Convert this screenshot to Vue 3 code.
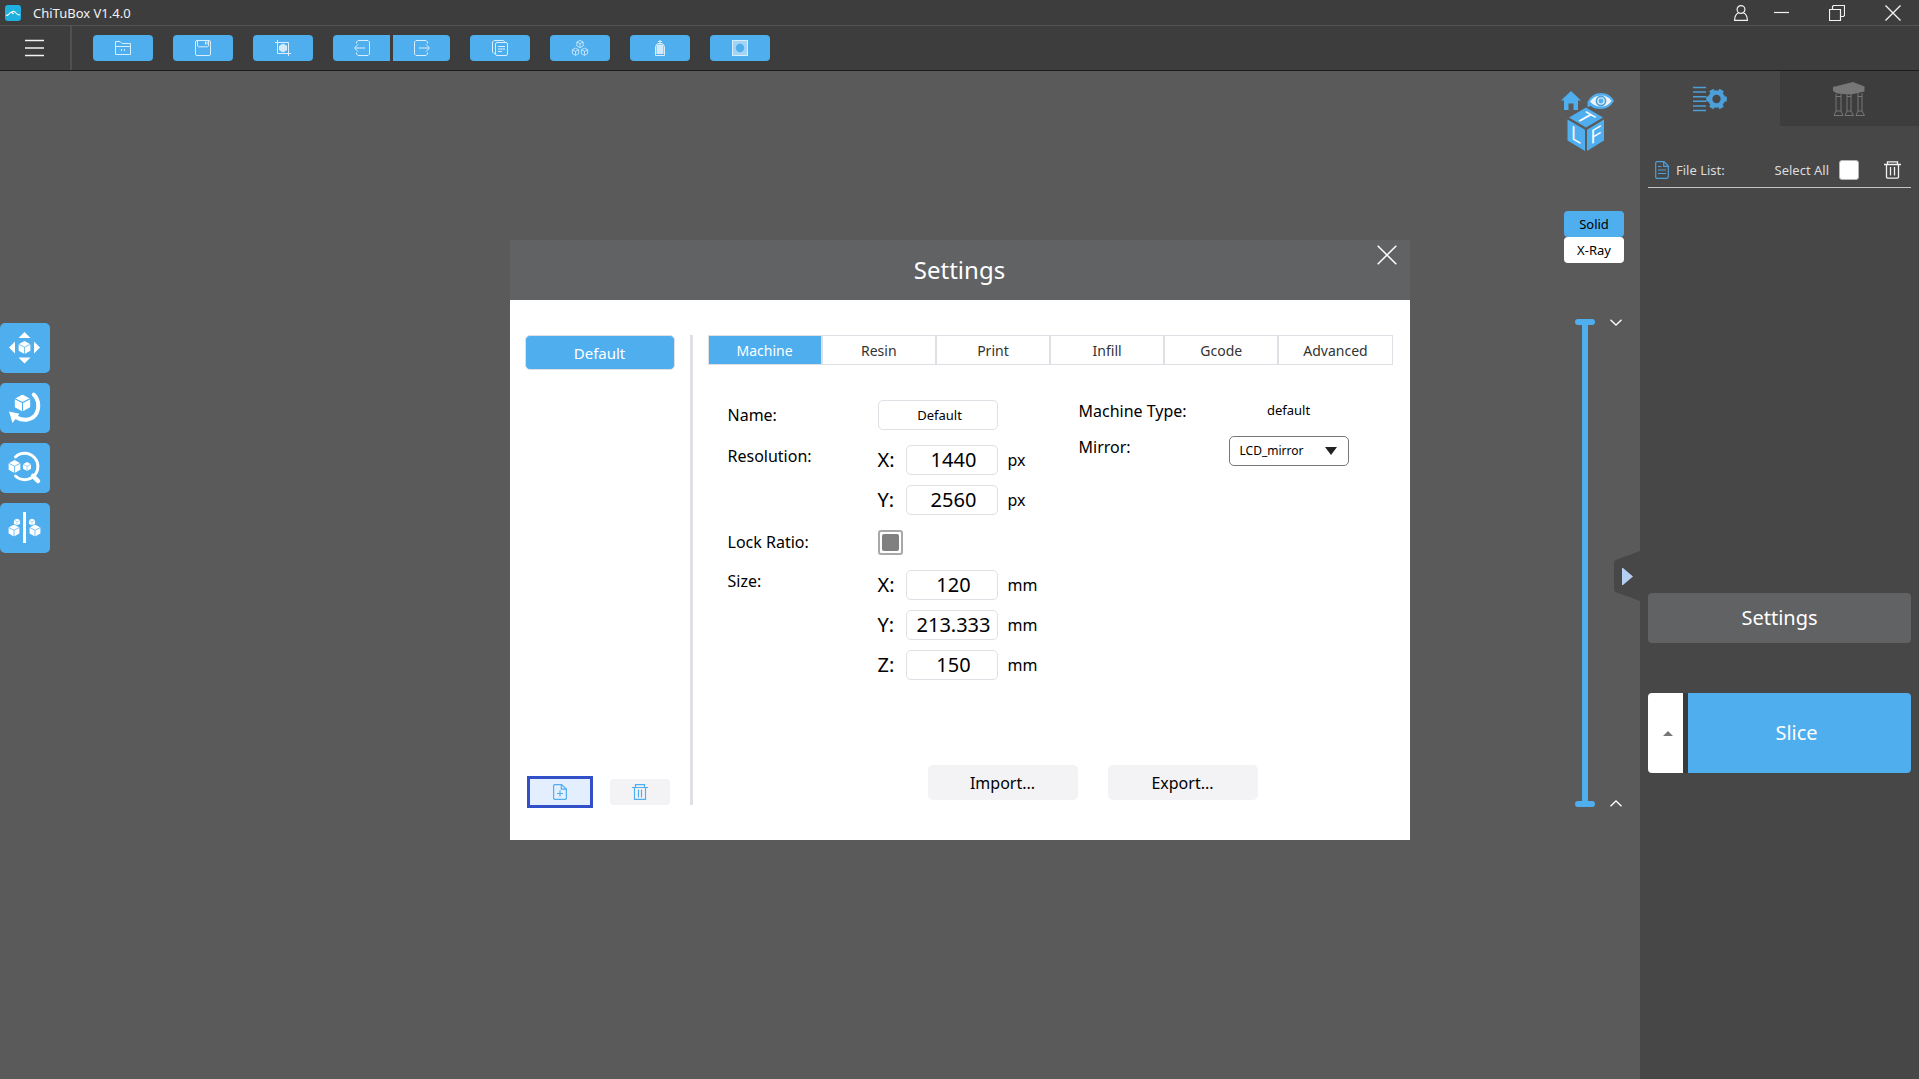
<script setup>
import { ref } from 'vue'

const tabs = ['Machine', 'Resin', 'Print', 'Infill', 'Gcode', 'Advanced']
const activeTab = ref('Machine')
const name = ref('Default')
const resolution = ref([
  { axis: 'X', value: '1440' },
  { axis: 'Y', value: '2560' },
])
const size = ref([
  { axis: 'X', value: '120' },
  { axis: 'Y', value: '213.333' },
  { axis: 'Z', value: '150' },
])
const mirror = ref('LCD_mirror')
const upper = ref(100)
const lower = ref(0)
</script>

<template>
  <div class="app">
    <svg class="defs" aria-hidden="true">
      <symbol id="solid-cube" viewBox="-10 -10 20 20">
        <path d="M0-10 9-5V5L0 10-9 5V-5Z" fill="#fff" />
        <path d="M-9-5 0-.5 9-5M0-.5V10" fill="none" stroke="#4faeee" stroke-width="1.2" />
      </symbol>
      <symbol id="line-cube" viewBox="-5 -5 10 10">
        <path d="M0-4 3.5-2.2V2.2L0 4-3.5 2.2V-2.2ZM-3.5-2.2 0-.4 3.5-2.2M0-.4V4" fill="none" stroke="#d9eefc" stroke-width=".9" />
      </symbol>
    </svg>

    <header class="titlebar">
      <svg class="logo" width="16" height="16" viewBox="0 0 16 16">
        <rect width="16" height="16" rx="3" fill="#1eb0de" />
        <path d="M1 10q1.500 1 3-1T7 7.500l1.500 1.500M6.500 7Q9 5.500 11 8t4 1.500" fill="none" stroke="#fff" stroke-width="1.200" />
      </svg>
      <span class="app-name">ChiTuBox V1.4.0</span>
      <div class="window-buttons">
        <button aria-label="Account">
          <svg width="14" height="16" viewBox="0 0 14 16"><circle cx="7" cy="4.500" r="3.900" /><path d="M4.600 7.800Q.7 9.500.6 15.300H13.400Q13.300 9.500 9.400 7.800" /></svg>
        </button>
        <button aria-label="Minimize">
          <svg width="15" height="16" viewBox="0 0 15 16"><path d="M0 7.500H15" /></svg>
        </button>
        <button aria-label="Restore">
          <svg width="16" height="16" viewBox="0 0 16 16"><path d="M.5 4.500h11v11H.5ZM3.500 4.500v-3l1-1h11v10l-1 1h-3" /></svg>
        </button>
        <button aria-label="Close">
          <svg width="16" height="16" viewBox="0 0 16 16"><path d="M.5.5l15 15M15.500.5l-15 15" stroke-width="1.400" /></svg>
        </button>
      </div>
    </header>

    <nav class="toolbar">
      <button class="menu" aria-label="Menu">
        <svg width="19" height="18" viewBox="0 0 19 18"><path d="M0 1.500h19M0 9h19M0 16.500h19" stroke="#f2f2f2" stroke-width="1.300" /></svg>
      </button>
      <div class="tools">
        <button aria-label="Open">
          <svg width="16" height="16" viewBox="0 0 16 16"><path d="M.5 14.500V1.500H5L7 3.500H15.500V14.500ZM.5 6.500h15M6.500 9v2M9.500 9v2" /></svg>
        </button>
        <button aria-label="Save">
          <svg width="16" height="16" viewBox="0 0 16 16"><rect x=".5" y=".5" width="15" height="15" rx="1.500" /><path d="M2.500.5v5.500l1 .8h9l1-.8V.5M10.500 1.500v3M12 1.500v3" /></svg>
        </button>
        <button aria-label="Fit platform">
          <svg width="16" height="16" viewBox="0 0 16 16"><path d="M0 2.500h13.500V16M2.500 0v13.500H16" /><path d="M8 4l3.500 2v4L8 12l-3.500-2V6Z" fill="#d2eafb" /></svg>
        </button>
        <div class="pair">
          <button aria-label="Undo">
            <svg width="16" height="16" viewBox="0 0 16 16"><path d="M2.500 3.500V2L4 .5h10L15.500 2v12L14 15.500H4L2.500 14v-1.500M11 8H.8M4 4.500L.6 8 4 11.500" /></svg>
          </button>
          <button aria-label="Redo">
            <svg width="16" height="16" viewBox="0 0 16 16"><path d="M13.500 3.500V2L12 .5H2L.5 2v12L2 15.500h10l1.500-1.500v-1.500M5 8h10.200M12 4.500L15.400 8 12 11.500" /></svg>
          </button>
        </div>
        <button aria-label="Copy">
          <svg width="16" height="16" viewBox="0 0 16 16"><rect x="3.500" y="2.500" width="12" height="13" rx="1.500" /><path d="M3.500 13.500H2L.5 12V2L2 .5h9.500l1.500 2M6 6.500h7M6 9h7M6 11.500h4" /></svg>
        </button>
        <button aria-label="Auto layout">
          <svg width="18" height="16" viewBox="0 0 18 16"><use href="#line-cube" x="4.500" y="-.5" width="9" height="9" /><use href="#line-cube" x="0" y="7.200" width="9" height="9" /><use href="#line-cube" x="9" y="7.200" width="9" height="9" /></svg>
        </button>
        <button aria-label="Hollow">
          <svg width="16" height="16" viewBox="0 0 16 16"><path d="M3.500 15.500V6.500Q4 4.500 6 3.500h4q2 1 2.500 3v9ZM6 1.500h4M8 0v3" /><rect x="4.500" y="4.500" width="7" height="9.500" fill="#d2eafb" stroke="none" /></svg>
        </button>
        <button aria-label="Dig hole">
          <svg width="16" height="16" viewBox="0 0 16 16"><rect x=".5" y=".5" width="15" height="15" fill="#a3d4f6" /><circle cx="8" cy="8" r="4.200" fill="#4faeee" stroke="none" /></svg>
        </button>
      </div>
    </nav>

    <main class="workspace">
      <section class="viewport">
        <div class="transforms">
          <button aria-label="Move">
            <svg viewBox="0 0 50 50"><g fill="#fff"><path d="M24.500 9l6 6h-12ZM24.500 40.500l6-6h-12ZM9 24.500l6-6v12ZM40 24.500l-6-6v12Z" /></g><use href="#solid-cube" x="18" y="18" width="13" height="13" /></svg>
          </button>
          <button aria-label="Rotate">
            <svg viewBox="0 0 50 50"><use href="#solid-cube" x="14" y="11.500" width="17" height="17" /><path d="M33.800 11.700C39.500 17 39.500 27 35 32.500 30.500 37.500 23 38 16.500 34.500" fill="none" stroke="#fff" stroke-width="4" stroke-linecap="round" /><path d="M9 28.500l10.500 2.300L12.500 40Z" fill="#fff" /></svg>
          </button>
          <button aria-label="Scale">
            <svg viewBox="0 0 50 50"><path d="M15.500 14A13.200 13.200 0 1 1 15.500 33" fill="none" stroke="#fff" stroke-width="3" stroke-linecap="round" /><path d="M33 33l5 5" stroke="#fff" stroke-width="4.500" stroke-linecap="round" /><use href="#solid-cube" x="8" y="17" width="13" height="13" /><use href="#solid-cube" x="22.500" y="19" width="9" height="9" /></svg>
          </button>
          <button aria-label="Mirror">
            <svg viewBox="0 0 50 50"><path d="M23 9h3v31h-3Z" fill="#fff" /><use href="#solid-cube" x="8" y="21.500" width="12" height="12" /><use href="#solid-cube" x="13.500" y="15.500" width="7" height="7" /><use href="#solid-cube" x="29" y="21.500" width="12" height="12" /><use href="#solid-cube" x="28.500" y="15.500" width="7" height="7" /></svg>
          </button>
        </div>

        <div class="view-controls">
          <svg class="view-cube" width="54" height="61" viewBox="0 0 54 61">
            <path d="M10 0 20 9.500H17V19H12.500V12.500H7.500V19H3V9.500H0Z" fill="#4faeee" />
            <path d="M26.500 11Q31 2 40 2t13 8Q48 18 40 18t-10-3l-3.500 1Z" fill="#4faeee" />
            <path d="M29 10.500Q33 4.500 40 4.500t10.500 5.500Q47 15.500 40 15.500T29 10.500Z" fill="#eef2f5" />
            <circle cx="40" cy="10" r="4.600" fill="#d5e6f2" stroke="#4a9fd8" stroke-width="1.600" />
            <circle cx="40" cy="10" r="2.400" fill="#4faeee" />
            <path d="M25 16.500 42 26.500 25 36.500 8 26.500ZM6.500 28.500 24 38.700V60L6.500 49.500ZM26 38.700 43 28.500V49.500L26 60Z" fill="#4faeee" />
            <g class="faces" fill="#fff" font-size="20" text-anchor="middle">
              <g transform="matrix(.87 .5 -.87 .5 24.500 26.500)"><text y="7">T</text></g>
              <g transform="matrix(.87 .5 0 1 15 43.500)"><text y="7">L</text></g>
              <g transform="matrix(.87 -.5 0 1 35 43.500)"><text y="7">F</text></g>
            </g>
          </svg>
          <div class="modes">
            <button class="active">Solid</button>
            <button>X-Ray</button>
          </div>
          <div class="layers">
            <div class="layer-slider">
              <input v-model="lower" type="range" aria-label="Lowest layer">
              <input v-model="upper" type="range" aria-label="Highest layer">
            </div>
            <div class="steps">
              <button aria-label="Lower the top layer">
                <svg width="12" height="7" viewBox="0 0 12 7"><path d="M.5.700 6 6 11.500.700" /></svg>
              </button>
              <button aria-label="Raise the bottom layer">
                <svg width="12" height="7" viewBox="0 0 12 7"><path d="M.5 6.300 6 1l5.500 5.300" /></svg>
              </button>
            </div>
          </div>
        </div>
      </section>

      <aside class="sidebar">
        <button class="collapse" aria-label="Collapse panel">
          <svg width="26" height="50" viewBox="0 0 26 50"><path d="M26 0 3 8.500Q0 9.500 0 12V38Q0 40.500 3 41.500L26 50Z" fill="#474747" /><path d="M8 17h1l10 8.500L9 34H8Z" fill="#b4cff2" /></svg>
        </button>
        <div class="side-tabs">
          <button aria-label="Slice settings">
            <svg width="34" height="26" viewBox="0 0 34 26">
              <path d="M0 1.500h13M0 6h13M0 10.700h13M0 15.300h13M0 20h13M0 24.500h13" stroke="#4c9fd8" stroke-width="1.600" />
              <g stroke="#4c9fd8" fill="none"><circle cx="23.500" cy="13" r="6.400" stroke-width="4.500" /><path d="M13.200 13h3M30.800 13h3M18.300 4l1.500 2.600M28.700 4l-1.500 2.600M18.300 22l1.500-2.600M28.700 22l-1.500-2.600" stroke-width="5" /></g>
            </svg>
          </button>
          <button class="inactive" aria-label="Supports">
            <svg width="32" height="34" viewBox="0 0 32 34">
              <path d="M0 5 20 0 31.500 4.500V9.500L18 12.500 4 11.500 0 9Z" fill="#777" />
              <path d="M3 12v17l-2 4.500h9L8 29V12M14 12v17l-2 4.500h8.500L18 29V12M25 11v18l-2 4.500h8.500L29 29V11M3 14.500h5M14 14.500h4M25 14.500h4M3 29h5M14 29h4M25 29h4" fill="none" stroke="#777" />
            </svg>
          </button>
        </div>
        <div class="side-body">
          <div class="file-head">
            <svg width="14" height="18" viewBox="0 0 14 18"><path d="M1.500.7H9L13.300 5V16L12 17.300H1.500L.7 16.500V1.500ZM8.700.7V5.300H13.300M3 5.500h3.500M3 9h8M3 12.500h8" fill="none" stroke="#4c9fd8" stroke-width="1.200" /></svg>
            <span class="file-title">File List:</span>
            <label for="select-all">Select All</label>
            <input id="select-all" type="checkbox">
            <button aria-label="Delete files">
              <svg width="17" height="18" viewBox="0 0 17 18"><path d="M0 3.500h17M3.500 3V.8h10V3M2.500 4v12.300l.8.900h10.400l.8-.9V4M6.500 6v8.500M10.500 6v8.500" fill="none" stroke="#f2f2f2" stroke-width="1.300" /></svg>
            </button>
          </div>
          <div class="file-list"></div>
          <button class="open-settings">Settings</button>
          <div class="slice-row">
            <button class="slice-more" aria-label="More slice options">
              <svg width="10" height="5" viewBox="0 0 10 5"><path d="M0 5 5 0l5 5Z" fill="#777" /></svg>
            </button>
            <button class="slice">Slice</button>
          </div>
        </div>
      </aside>
    </main>

    <div class="overlay">
      <section class="dialog" role="dialog" aria-labelledby="dialog-title">
        <header class="dialog-head">
          <h1 id="dialog-title">Settings</h1>
          <button aria-label="Close settings">
            <svg width="20" height="20" viewBox="0 0 20 20"><path d="M.7.700l18.600 18.600M19.300.700.700 19.300" stroke="#fff" stroke-width="1.500" /></svg>
          </button>
        </header>
        <div class="dialog-body">
          <div class="profiles">
            <button class="profile">Default</button>
            <div class="profile-actions">
              <button class="add" aria-label="Add profile">
                <svg width="14" height="16" viewBox="0 0 14 16"><path d="M1.500.6H8.500L13.400 5V14.500L12.500 15.400H1.500L.6 14.500V1.500ZM8.300.6V5.200H13.400M4 9.500h6M7 6.500v6" fill="none" stroke="#4faeee" stroke-width="1.200" /></svg>
              </button>
              <button aria-label="Delete profile">
                <svg width="16" height="16" viewBox="0 0 16 16"><path d="M0 3.500h16M3.500 3V.6h9V3M2.500 4v11.400h11V4M6.500 5.500v8M9.500 5.500v8" fill="none" stroke="#4faeee" stroke-width="1.200" /></svg>
              </button>
            </div>
          </div>

          <div class="editor">
            <div class="tabs" role="tablist">
              <button v-for="t in tabs" :key="t" role="tab" :class="{ active: t === activeTab }" @click="activeTab = t">{{ t }}</button>
            </div>
            <form class="form" @submit.prevent>
              <div class="column">
                <div class="field centered">
                  <label for="machine-name">Name:</label>
                  <input id="machine-name" v-model="name" class="name-input" type="text">
                </div>
                <div class="field">
                  <span>Resolution:</span>
                  <div class="axes">
                    <div v-for="r in resolution" :key="r.axis" class="axis">
                      <label :for="'resolution-' + r.axis">{{ r.axis }}:</label>
                      <input :id="'resolution-' + r.axis" v-model="r.value" type="text">
                      <span>px</span>
                    </div>
                  </div>
                </div>
                <div class="field centered">
                  <label for="lock-ratio">Lock Ratio:</label>
                  <input id="lock-ratio" class="lock" type="checkbox" checked>
                </div>
                <div class="field">
                  <span>Size:</span>
                  <div class="axes">
                    <div v-for="s in size" :key="s.axis" class="axis">
                      <label :for="'size-' + s.axis">{{ s.axis }}:</label>
                      <input :id="'size-' + s.axis" v-model="s.value" type="text">
                      <span>mm</span>
                    </div>
                  </div>
                </div>
              </div>
              <div class="column machine">
                <div class="field">
                  <span>Machine Type:</span>
                  <span class="machine-type">default</span>
                </div>
                <div class="field">
                  <label for="mirror">Mirror:</label>
                  <div class="select">
                    <select id="mirror" v-model="mirror">
                      <option>LCD_mirror</option>
                      <option>normal</option>
                    </select>
                    <svg width="12" height="8" viewBox="0 0 12 8"><path d="M0 0h12L6 8Z" fill="#222" /></svg>
                  </div>
                </div>
              </div>
            </form>
            <div class="file-actions">
              <button>Import...</button>
              <button>Export...</button>
            </div>
          </div>
        </div>
      </section>
    </div>
  </div>
</template>

<style>
body {
  margin: 0;
  background: #5a5a5a;
}
</style>

<style scoped>
.app {
  display: flex;
  flex-direction: column;
  min-height: 100vh;
  font-family: "Noto Sans", "Open Sans", sans-serif;
  font-size: 14px;
  color: #000;
}
.app *,
.app *::before {
  box-sizing: border-box;
}
.defs {
  position: absolute;
  width: 0;
  height: 0;
}
button,
input,
select {
  margin: 0;
  padding: 0;
  border: 0;
  background: none;
  font: inherit;
  color: inherit;
}
button {
  display: flex;
  align-items: center;
  justify-content: center;
}
svg {
  display: block;
}

.titlebar {
  display: flex;
  align-items: center;
  height: 26px;
  padding: 0 18px 0 5px;
  background: #3d3d3d;
  border-bottom: 1px solid #535353;
}
.app-name {
  margin-left: 12px;
  font-size: 13px;
  color: #f2f2f2;
}
.window-buttons {
  display: flex;
  margin-left: auto;
}
.window-buttons button {
  margin-left: 40px;
}
.window-buttons button:nth-child(2) {
  margin-left: 26px;
}
.window-buttons svg {
  fill: none;
  stroke: #f2f2f2;
  stroke-width: 1.2;
}

.toolbar {
  display: flex;
  height: 45px;
  background: #3d3d3d;
  border-bottom: 1px solid #1c1c1c;
}
.menu {
  width: 72px;
  padding-right: 2px;
  border-right: 2px solid #505050;
}
.tools {
  display: flex;
  align-items: center;
  gap: 20px;
  padding-left: 21px;
}
.tools button {
  width: 60px;
  height: 26px;
  border-radius: 4px;
  background: #4faeee;
}
.tools svg {
  fill: none;
  stroke: #d9eefc;
}
.tools .pair {
  display: flex;
  gap: 3px;
}
.tools .pair button {
  width: 57px;
}
.tools .pair button + button {
  border-radius: 0 4px 4px 0;
}
.tools .pair button:first-child {
  border-radius: 4px 0 0 4px;
}

.workspace {
  display: flex;
  flex: 1;
}
.viewport {
  display: flex;
  flex: 1;
  justify-content: space-between;
  background: #5a5a5a;
}
.transforms {
  display: flex;
  flex-direction: column;
  gap: 10px;
  padding-top: 252px;
}
.transforms button {
  width: 50px;
  height: 50px;
  border-radius: 5px;
  background: #4faeee;
}
.transforms svg {
  width: 50px;
  height: 50px;
}
.view-controls {
  width: 79px;
  padding-top: 20px;
}
.faces {
  font-family: "Liberation Sans", sans-serif;
}
.modes {
  width: 60px;
  margin: 59px 0 56px 3px;
}
.modes button {
  width: 100%;
  height: 26px;
  border-radius: 4px;
  background: #fff;
  font-size: 13px;
}
.modes .active {
  background: #4faeee;
}
.layers {
  display: flex;
  gap: 15px;
  height: 488px;
  margin-left: 14px;
}
.layer-slider {
  position: relative;
  width: 20px;
  background: linear-gradient(#4faeee, #4faeee) center / 6px 100% no-repeat;
}
.layer-slider input {
  position: absolute;
  inset: 0;
  width: 20px;
  height: 100%;
  appearance: none;
  writing-mode: vertical-lr;
  direction: rtl;
  pointer-events: none;
}
.layer-slider input::-webkit-slider-thumb {
  appearance: none;
  width: 20px;
  height: 6px;
  border-radius: 3px;
  background: #4faeee;
  pointer-events: auto;
}
.steps {
  display: flex;
  flex-direction: column;
  justify-content: space-between;
}
.steps svg {
  fill: none;
  stroke: #fff;
  stroke-width: 1.3;
}

.sidebar {
  position: relative;
  width: 279px;
  background: #474747;
}
.collapse {
  position: absolute;
  top: 480px;
  right: 100%;
}
.side-tabs {
  display: flex;
}
.side-tabs button {
  flex: 1;
  height: 55px;
}
.side-tabs .inactive {
  background: #3d3d3d;
}
.side-body {
  padding: 34px 8px 0;
}
.file-head {
  display: flex;
  align-items: center;
  padding: 0 10px 7px 7px;
  border-bottom: 1px solid #c4c4c4;
  font-size: 13px;
  line-height: 20px;
  color: #dcdcdc;
}
.file-title {
  margin: 0 auto 0 7px;
}
.file-head input {
  appearance: none;
  width: 20px;
  height: 20px;
  margin: 0 25px 0 10px;
  border: 1px solid #b4b4b4;
  border-radius: 3px;
  background: #fff;
}
.file-list {
  min-height: 405px;
}
.open-settings {
  width: 100%;
  height: 50px;
  padding-bottom: 2px;
  border-radius: 4px;
  background: #606264;
  font-size: 20px;
  color: #fff;
}
.slice-row {
  display: flex;
  margin-top: 50px;
  border-radius: 4px;
  background: #3a3a3a;
  overflow: hidden;
}
.slice-row button {
  height: 80px;
}
.slice-more {
  width: 35px;
  margin-right: 5px;
  padding-left: 5px;
  background: #fff;
}
.slice {
  flex: 1;
  padding: 0 6px 2px 0;
  background: #4faeee;
  font-size: 20px;
  color: #fff;
}

.overlay {
  position: fixed;
  inset: 0;
  display: flex;
  align-items: center;
  justify-content: center;
}
.dialog {
  width: 900px;
  max-width: 100%;
  background: #fff;
}
.dialog-head {
  display: grid;
  grid-template-columns: 1fr auto 1fr;
  align-items: center;
  height: 60px;
  background: #606264;
  color: #fff;
}
.dialog-head h1 {
  grid-column: 2;
  margin: 0;
  font-size: 24px;
  font-weight: 400;
}
.dialog-head button {
  place-self: start end;
  margin: 5px 13px;
}
.dialog-body {
  display: flex;
  padding: 35px 17px 35px 15px;
}
.profiles {
  display: flex;
  flex-direction: column;
  justify-content: space-between;
  padding-right: 15px;
  border-right: 3px solid #dfdfe6;
}
.profile {
  width: 150px;
  height: 35px;
  padding-top: 1px;
  border: 1px solid #dfdfe6;
  border-radius: 5px;
  background: #4faeee;
  font-size: 15px;
  color: #fff;
}
.profile-actions {
  display: flex;
  gap: 20px;
  padding-left: 5px;
}
.profile-actions button {
  width: 60px;
  height: 26px;
  border-radius: 4px;
  background: #f3f3f6;
}
.profile-actions .add {
  border-radius: 0;
  outline: 3px solid #304fc9;
  background: #e3efff;
}
.editor {
  flex: 1;
  padding: 0 0 5px 15px;
}
.tabs {
  display: flex;
  height: 30px;
  border: 1px solid #dfdfe6;
}
.tabs button {
  flex: 1;
  padding-top: 2px;
  font-size: 14px;
  color: #333;
}
.tabs button + button {
  border-left: 2px solid #dfdfe6;
}
.tabs .active {
  background: #4faeee;
  color: #fff;
}
.form {
  display: grid;
  grid-template-columns: 351px 1fr;
  margin: 35px 0 85px 20px;
  font-size: 16px;
  line-height: 22px;
}
.column {
  display: flex;
  flex-direction: column;
  gap: 15px;
}
.machine {
  gap: 14px;
}
.field {
  display: grid;
  grid-template-columns: 150px 1fr;
  align-items: start;
}
.centered {
  align-items: center;
}
.axes {
  display: grid;
  gap: 10px;
}
.axis {
  display: flex;
  align-items: center;
}
.axis label {
  width: 28px;
  font-size: 20px;
}
.axis span {
  margin-left: 10px;
}
.form input[type="text"] {
  width: 92px;
  height: 30px;
  padding-left: 4px;
  border: 1px solid #dfdfe6;
  border-radius: 5px;
  background: #fff;
  font-size: 20px;
  text-align: center;
}
.form .name-input[type="text"] {
  width: 120px;
  font-size: 13px;
}
.lock {
  appearance: none;
  width: 25px;
  height: 25px;
  padding: 2px;
  border: 2px solid #a8a8a8;
  border-radius: 3px;
}
.lock:checked::before {
  content: "";
  display: block;
  width: 17px;
  height: 17px;
  border-radius: 2px;
  background: #808080;
}
.machine-type {
  width: 120px;
  font-size: 13px;
  line-height: 20px;
  text-align: center;
}
.select {
  position: relative;
  width: 120px;
}
.select select {
  appearance: none;
  width: 100%;
  height: 30px;
  padding-left: 10px;
  border: 1px solid #777;
  border-radius: 5px;
  background: #fff;
  font-size: 12px;
}
.select svg {
  position: absolute;
  top: 11px;
  right: 12px;
  pointer-events: none;
}
.file-actions {
  display: flex;
  gap: 30px;
  padding-left: 220px;
}
.file-actions button {
  width: 150px;
  height: 35px;
  padding-top: 2px;
  border-radius: 5px;
  background: #f3f3f6;
  font-size: 16px;
}
</style>
